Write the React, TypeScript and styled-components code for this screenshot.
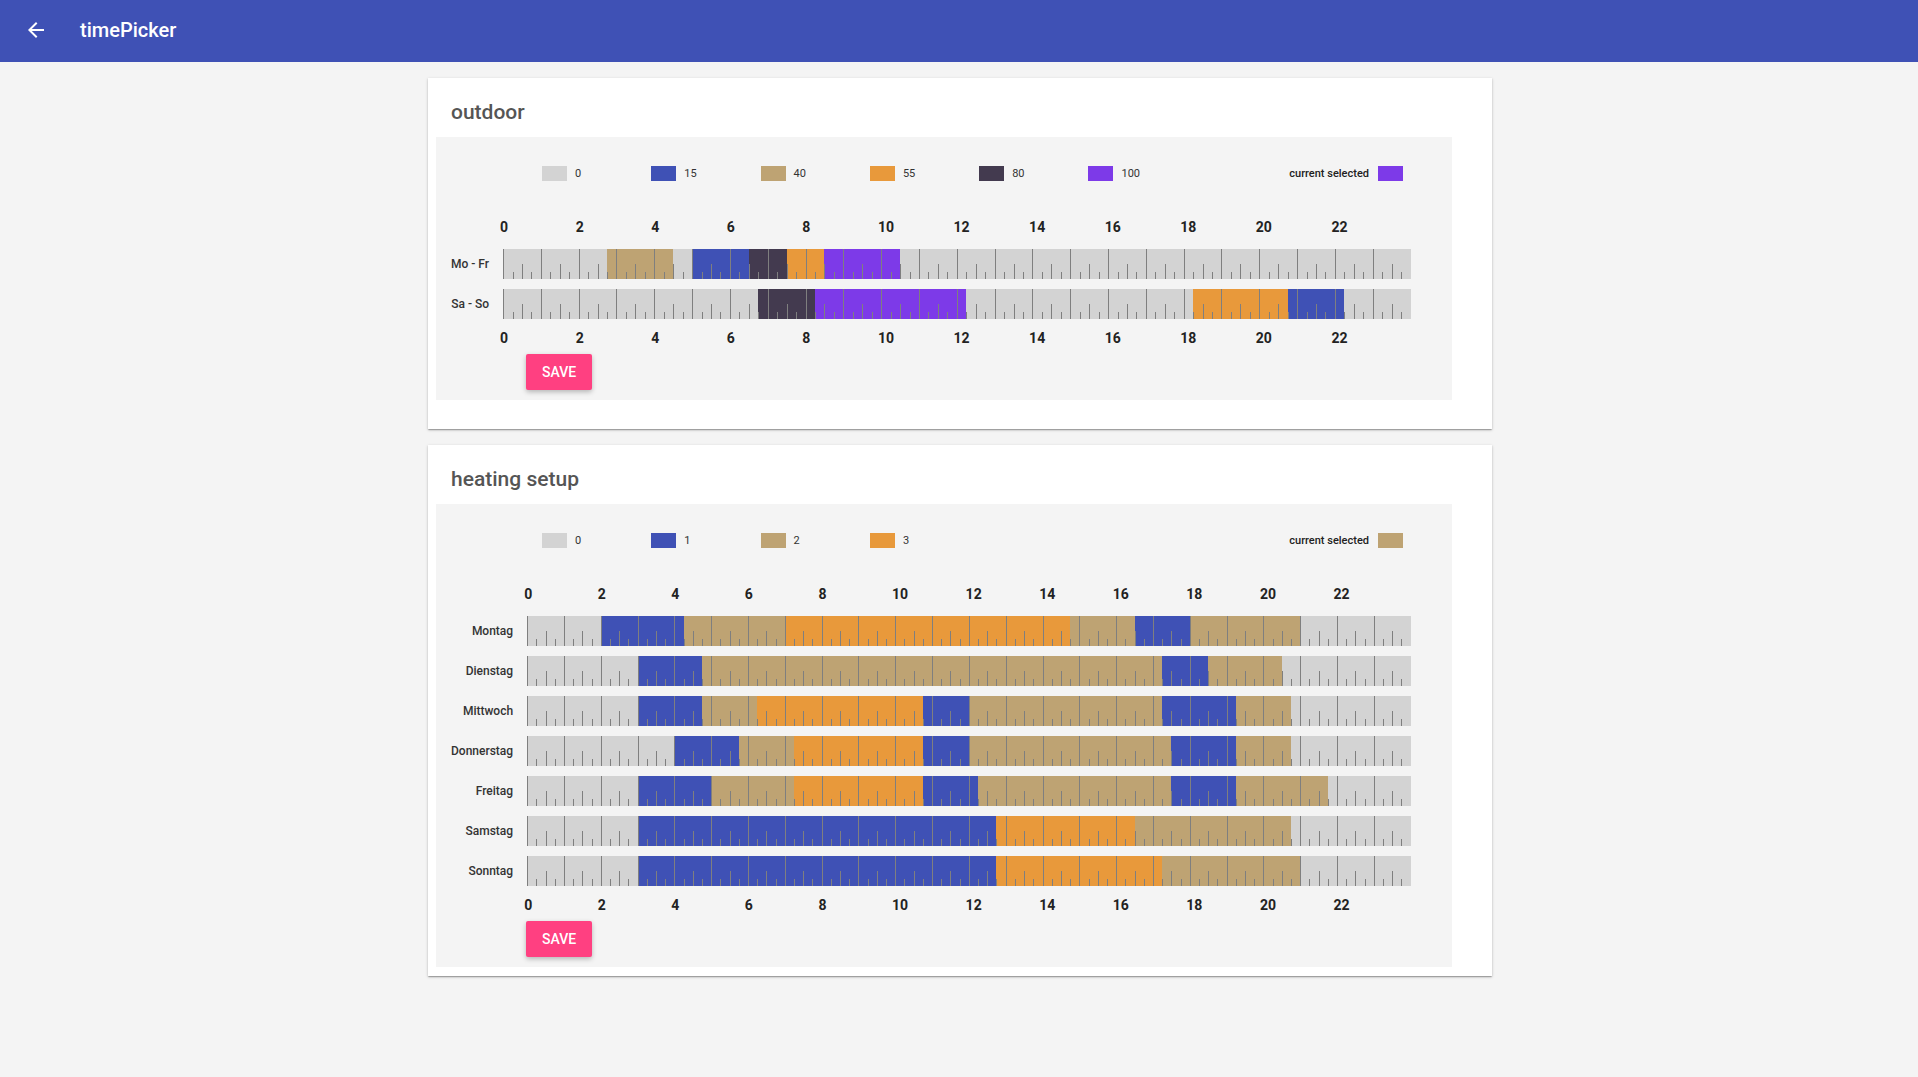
import React from 'react';
import styled, { createGlobalStyle } from 'styled-components';

const GlobalStyle = createGlobalStyle`
  html, body {
    margin: 0;
    padding: 0;
    background: #f4f4f4;
    font-family: Roboto, "Noto Sans", "Liberation Sans", sans-serif;
  }
  * { box-sizing: border-box; }
`;

type Segment = [number, number]; // [end hour, level index]

interface Level {
  label: string;
  color: string;
}

interface DaySchedule {
  day: string;
  segments: Segment[];
}

interface PickerConfig {
  title: string;
  levels: Level[];
  selected: number;
  rows: DaySchedule[];
  bottomSpace: number;
}

const GREY = '#d3d3d3';
const BLUE = '#3f51b5';
const TAN = '#bea373';
const ORANGE = '#e8993b';
const DARK = '#433a4f';
const PURPLE = '#7d3ae8';
const TICK = '#7f7f7f';

const pickers: PickerConfig[] = [
  {
    title: 'outdoor',
    levels: [
      { label: '0', color: GREY },
      { label: '15', color: BLUE },
      { label: '40', color: TAN },
      { label: '55', color: ORANGE },
      { label: '80', color: DARK },
      { label: '100', color: PURPLE },
    ],
    selected: 5,
    bottomSpace: 29,
    rows: [
      {
        day: 'Mo - Fr',
        segments: [[2.75, 0], [4.5, 2], [5, 0], [6.5, 1], [7.5, 4], [8.5, 3], [10.5, 5], [24, 0]],
      },
      {
        day: 'Sa - So',
        segments: [[6.75, 0], [8.25, 4], [12.25, 5], [18.25, 0], [20.75, 3], [22.25, 1], [24, 0]],
      },
    ],
  },
  {
    title: 'heating setup',
    levels: [
      { label: '0', color: GREY },
      { label: '1', color: BLUE },
      { label: '2', color: TAN },
      { label: '3', color: ORANGE },
    ],
    selected: 2,
    bottomSpace: 9,
    rows: [
      { day: 'Montag', segments: [[2, 0], [4.25, 1], [7, 2], [14.75, 3], [16.5, 2], [18, 1], [21, 2], [24, 0]] },
      { day: 'Dienstag', segments: [[3, 0], [4.75, 1], [17.25, 2], [18.5, 1], [20.5, 2], [24, 0]] },
      {
        day: 'Mittwoch',
        segments: [[3, 0], [4.75, 1], [6.25, 2], [10.75, 3], [12, 1], [17.25, 2], [19.25, 1], [20.75, 2], [24, 0]],
      },
      {
        day: 'Donnerstag',
        segments: [[4, 0], [5.75, 1], [7.25, 2], [10.75, 3], [12, 1], [17.5, 2], [19.25, 1], [20.75, 2], [24, 0]],
      },
      {
        day: 'Freitag',
        segments: [[3, 0], [5, 1], [7.25, 2], [10.75, 3], [12.25, 1], [17.5, 2], [19.25, 1], [21.75, 2], [24, 0]],
      },
      { day: 'Samstag', segments: [[3, 0], [12.75, 1], [16.5, 3], [20.75, 2], [24, 0]] },
      { day: 'Sonntag', segments: [[3, 0], [12.75, 1], [17.25, 3], [21, 2], [24, 0]] },
    ],
  },
];

const toQuarters = (segments: Segment[]): number[] => {
  const out: number[] = [];
  let start = 0;
  segments.forEach(([end, level]) => {
    const n = Math.round((end - start) * 4);
    for (let i = 0; i < n; i += 1) out.push(level);
    start = end;
  });
  return out;
};

const HOUR_LABELS = Array.from({ length: 12 }, (_, i) => String(i * 2));

/* ---------- app bar ---------- */

const AppBar = styled.header`
  height: 62px;
  background: #3f51b5;
  color: #fff;
  display: flex;
  align-items: center;
  padding: 0 0 2px 24px;
`;

const BackButton = styled.button`
  width: 24px;
  height: 24px;
  padding: 0;
  border: 0;
  background: none;
  color: #fff;
  display: flex;
  margin-right: 32px;
  cursor: pointer;
`;

const AppTitle = styled.h1`
  margin: 0;
  font-size: 20px;
  font-weight: 500;
  line-height: 24px;
`;

/* ---------- page & card ---------- */

const Page = styled.main`
  display: flex;
  flex-direction: column;
  align-items: center;
  gap: 16px;
  padding: 16px 0 16px 2px;
`;

const Card = styled.section<{ $bottom: number }>`
  width: 1064px;
  background: #fff;
  padding: 22px 40px ${(p) => p.$bottom}px 8px;
  box-shadow: 0 1px 3px 0 rgba(0, 0, 0, 0.2), 0 1px 1px 0 rgba(0, 0, 0, 0.14),
    0 2px 1px -1px rgba(0, 0, 0, 0.12);
`;

const CardTitle = styled.h2`
  margin: 0 0 13px 15px;
  font-size: 21px;
  font-weight: 500;
  line-height: 24px;
  color: #555;
`;

const Panel = styled.div`
  background: #f4f4f4;
  padding: 29px 41px 10px 15px;
`;

/* ---------- legend ---------- */

const Legend = styled.div`
  display: flex;
  align-items: center;
  height: 15px;
  padding: 0 8px 0 91px;
`;

const LegendItem = styled.div`
  width: 109.3px;
  display: flex;
  align-items: center;
  gap: 8px;
`;

const Swatch = styled.span<{ $color: string }>`
  width: 25px;
  height: 15px;
  background: ${(p) => p.$color};
  flex: none;
`;

const LegendLabel = styled.span`
  font-size: 11px;
  color: #333;
`;

const CurrentSelected = styled.div`
  margin-left: auto;
  display: flex;
  align-items: center;
  gap: 9px;
`;

const CurrentLabel = styled.span`
  font-size: 11px;
  font-weight: 500;
  color: #222;
`;

/* ---------- timeline ---------- */

const Timeline = styled.div`
  display: grid;
  grid-template-columns: max-content 1fr;
  column-gap: 14px;
  row-gap: 10px;
  margin-top: 36px;
`;

const Scale = styled.div<{ $bottom?: boolean }>`
  grid-column: 2;
  display: flex;
  margin: ${(p) => (p.$bottom ? '-1px 4px 0 -3px' : '0 4px 2px -3px')};
  font-size: 14px;
  font-weight: 700;
  line-height: 20px;
  color: #222;
`;

const ScaleCell = styled.span`
  flex: 1 1 0;
`;

const DayLabel = styled.div`
  align-self: center;
  text-align: right;
  font-size: 12px;
  font-weight: 500;
  color: #333;
`;

const Bar = styled.div`
  display: flex;
  height: 30px;
  border-right: 1px solid ${TICK};
`;

const Quarter = styled.div<{ $color: string; $tick: number }>`
  flex: 1 1 0;
  min-width: 0;
  position: relative;
  background: ${(p) => p.$color};

  &::before {
    content: '';
    position: absolute;
    left: 0;
    bottom: 0;
    width: 1px;
    background: ${TICK};
    height: ${(p) => (p.$tick === 0 ? '100%' : p.$tick === 2 ? '15px' : '7px')};
  }
`;

const SaveButton = styled.button`
  display: block;
  margin: 6px 0 0 75px;
  height: 36px;
  padding: 0 16px;
  border: 0;
  border-radius: 2px;
  background: #ff4081;
  color: #fff;
  font-family: inherit;
  font-size: 14px;
  font-weight: 500;
  box-shadow: 0 2px 5px 0 rgba(0, 0, 0, 0.26);
  cursor: pointer;
`;

const HourScale: React.FC<{ bottom?: boolean }> = ({ bottom }) => (
  <Scale $bottom={bottom}>
    {HOUR_LABELS.map((h) => (
      <ScaleCell key={h}>{h}</ScaleCell>
    ))}
  </Scale>
);

const TimePicker: React.FC<{ config: PickerConfig }> = ({ config }) => (
  <Card $bottom={config.bottomSpace}>
    <CardTitle>{config.title}</CardTitle>
    <Panel>
      <Legend>
        {config.levels.map((lvl) => (
          <LegendItem key={lvl.label}>
            <Swatch $color={lvl.color} />
            <LegendLabel>{lvl.label}</LegendLabel>
          </LegendItem>
        ))}
        <CurrentSelected>
          <CurrentLabel>current selected</CurrentLabel>
          <Swatch $color={config.levels[config.selected].color} />
        </CurrentSelected>
      </Legend>
      <Timeline>
        <HourScale />
        {config.rows.map((row) => (
          <React.Fragment key={row.day}>
            <DayLabel>{row.day}</DayLabel>
            <Bar>
              {toQuarters(row.segments).map((lvl, i) => (
                <Quarter key={i} $color={config.levels[lvl].color} $tick={i % 4} />
              ))}
            </Bar>
          </React.Fragment>
        ))}
        <HourScale bottom />
      </Timeline>
      <SaveButton>SAVE</SaveButton>
    </Panel>
  </Card>
);

export default function App() {
  return (
    <>
      <GlobalStyle />
      <AppBar>
        <BackButton aria-label="back">
          <svg width="24" height="24" viewBox="0 0 24 24" fill="currentColor">
            <path d="M20 11H7.83l5.59-5.59L12 4l-8 8 8 8 1.41-1.41L7.83 13H20v-2z" />
          </svg>
        </BackButton>
        <AppTitle>timePicker</AppTitle>
      </AppBar>
      <Page>
        {pickers.map((p) => (
          <TimePicker key={p.title} config={p} />
        ))}
      </Page>
    </>
  );
}
